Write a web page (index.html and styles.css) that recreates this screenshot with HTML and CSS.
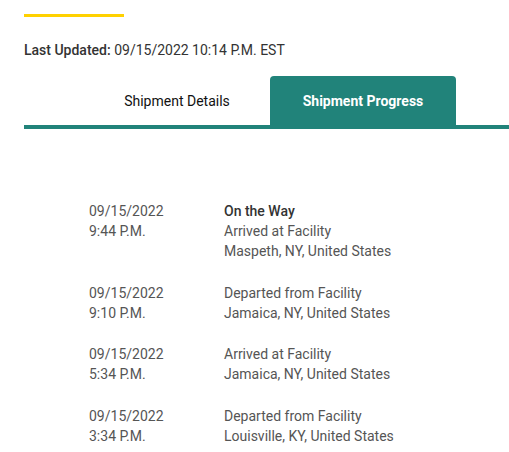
FILE: index.html
```html
<!DOCTYPE html>
<html>
<head>
<meta charset="utf-8">
<link rel="stylesheet" href="styles.css">
</head>
<body>
<div class="page">
  <div class="accent"></div>
  <p class="updated"><span class="label">Last Updated:</span> 09/15/2022 10:14 P.M. EST</p>
  <div class="tabs">
    <div class="tab">Shipment Details</div>
    <div class="tab active">Shipment Progress</div>
  </div>
  <div class="timeline">
    <div class="event">
      <div class="when">09/15/2022<br>9:44 P.M.</div>
      <div class="what"><span class="status">On the Way</span><br>Arrived at Facility<br>Maspeth, NY, United States</div>
    </div>
    <div class="event">
      <div class="when">09/15/2022<br>9:10 P.M.</div>
      <div class="what">Departed from Facility<br>Jamaica, NY, United States</div>
    </div>
    <div class="event">
      <div class="when">09/15/2022<br>5:34 P.M.</div>
      <div class="what">Arrived at Facility<br>Jamaica, NY, United States</div>
    </div>
    <div class="event">
      <div class="when">09/15/2022<br>3:34 P.M.</div>
      <div class="what">Departed from Facility<br>Louisville, KY, United States</div>
    </div>
  </div>
</div>
</body>
</html>
```
FILE: styles.css
```css
html, body {
  margin: 0;
  padding: 0;
  background: #fff;
}
body {
  font-family: Roboto, "Liberation Sans", sans-serif;
  font-size: 14px;
  color: #333;
  overflow: hidden;
}
.page {
  padding: 14px 0 0 24px;
}
.accent {
  width: 100px;
  height: 3px;
  background: #ffd100;
}
.updated {
  margin: 23px 0 0 0;
  line-height: 20px;
  color: #333;
}
.label {
  font-weight: 500;
}
.tabs {
  margin-top: 16px;
  display: flex;
  padding-left: 60px;
  border-bottom: 4px solid #21837a;
}
.tab {
  width: 186px;
  height: 49px;
  display: flex;
  align-items: center;
  justify-content: center;
  font-weight: 400;
  color: #111;
  border-radius: 4px 4px 0 0;
}
.tab.active {
  background: #21837a;
  color: #fff;
  font-weight: 700;
}
.timeline {
  padding: 72px 0 0 65px;
  display: flex;
  flex-direction: column;
  gap: 21.5px;
}
.event {
  display: flex;
  line-height: 20px;
  color: #555;
}
.when {
  width: 135px;
}
.status {
  font-weight: 500;
  color: #333;
}
```
